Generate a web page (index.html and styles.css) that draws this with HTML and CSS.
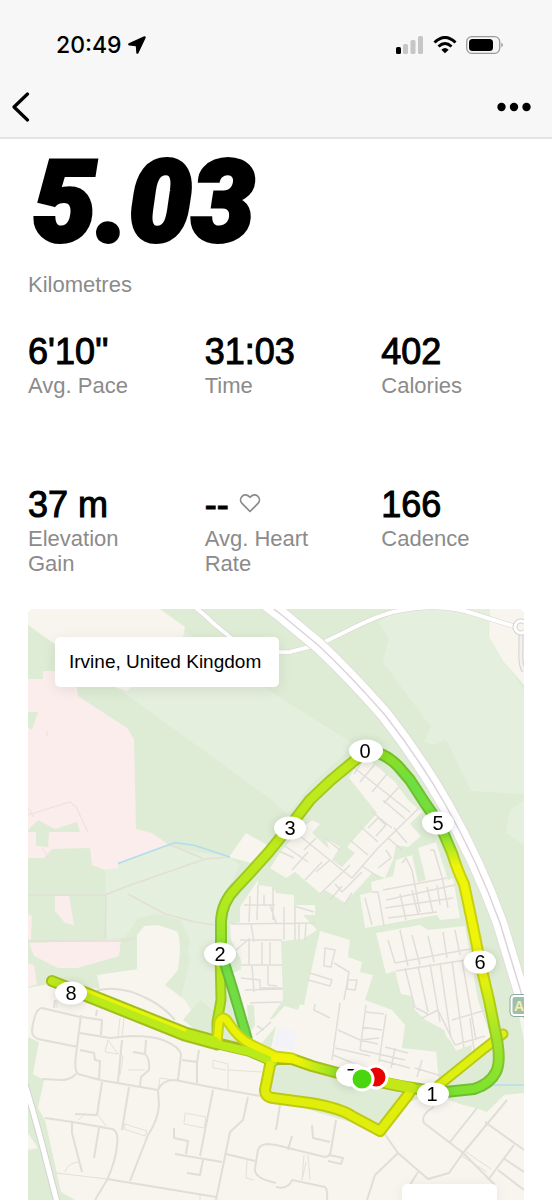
FILE: index.html
```html
<!DOCTYPE html>
<html lang="en-GB">
<head>
<meta charset="utf-8">
<meta name="viewport" content="width=device-width, initial-scale=1">
<title>Run details</title>
<link rel="stylesheet" href="styles.css">
</head>
<body>
<header class="top">
  <div class="status">
    <div class="clock">
      <span>20:49</span>
      <svg class="locate" viewBox="0 0 18 18" aria-hidden="true"><path d="M16.200.3.800 7.300Q-.6 8.500 1 9.500L7.800 10.200 8.300 16.900Q9 18.600 10.400 17.200L17.700 1.800Q18 .1 16.200.3Z"/></svg>
    </div>
    <div class="indicators">
      <svg class="signal" viewBox="0 0 28 18" aria-hidden="true">
        <rect x="0" y="11" width="5" height="7" rx="1.500"/>
        <g fill="#c6c6c6"><rect x="7" y="8" width="5" height="10" rx="1.500"/><rect x="14.500" y="4" width="5" height="14" rx="1.500"/><rect x="22" y="0" width="5" height="18" rx="1.500"/></g>
      </svg>
      <svg class="wifi" viewBox="0 0 24 18" aria-hidden="true"><path d="M1.500 6.500Q12-3.500 22.500 6.500M5.500 10.500Q12 4.500 18.500 10.500" fill="none" stroke="#000" stroke-width="3"/><path d="M8.300 13.700Q12 10.300 15.700 13.700L12 17.300Z"/></svg>
      <svg class="battery" viewBox="0 0 38 18" aria-hidden="true"><rect x=".7" y=".7" width="33" height="16.600" rx="5" fill="none" stroke="#999" stroke-width="1.300"/><rect x="3" y="3" width="24" height="12" rx="3.500"/><path d="M35.500 6.500q2.400 2.500 0 5Z" fill="#777"/></svg>
    </div>
  </div>
  <nav class="bar">
    <button class="icon-button" type="button" aria-label="Back"><svg class="back" viewBox="0 0 18 30" aria-hidden="true"><path d="M15.500 2 2 15 15.500 28" fill="none" stroke="#000" stroke-width="3.200" stroke-linecap="round" stroke-linejoin="round"/></svg></button>
    <button class="icon-button" type="button" aria-label="More"><svg class="more" viewBox="0 0 34 10" aria-hidden="true"><circle cx="4.500" cy="5" r="4.200"/><circle cx="17" cy="5" r="4.200"/><circle cx="29.500" cy="5" r="4.200"/></svg></button>
  </nav>
</header>
<main class="content">
  <h1 class="distance">5.03</h1>
  <p class="label">Kilometres</p>
  <dl class="stats">
    <div class="stat"><dd class="value">6'10''</dd><dt class="label">Avg. Pace</dt></div>
    <div class="stat"><dd class="value">31:03</dd><dt class="label">Time</dt></div>
    <div class="stat"><dd class="value">402</dd><dt class="label">Calories</dt></div>
    <div class="stat"><dd class="value">37 m</dd><dt class="label">Elevation Gain</dt></div>
    <div class="stat"><dd class="value">-- <svg class="heart" viewBox="0 0 22 24" aria-hidden="true"><path d="M11 18.500 2.800 10.200C-1.200 5.500 5.500-2.200 11 4.300 16.500-2.200 23.200 5.500 19.200 10.200Z" fill="none" stroke="#8b8b8b" stroke-width="1.700" stroke-linejoin="round"/></svg></dd><dt class="label">Avg. Heart Rate</dt></div>
    <div class="stat"><dd class="value">166</dd><dt class="label">Cadence</dt></div>
  </dl>
  <section class="map" aria-label="Route map">
    <svg class="map-art" viewBox="28 609 496 591">
      <defs>
        <linearGradient id="west" gradientUnits="userSpaceOnUse" x1="0" y1="860" x2="0" y2="960"><stop offset="0" stop-color="#bdea1b"/><stop offset=".5" stop-color="#b0e91d"/><stop offset="1" stop-color="#83e333"/></linearGradient>
        <linearGradient id="westEdge" gradientUnits="userSpaceOnUse" x1="0" y1="860" x2="0" y2="960"><stop offset="0" stop-color="#a2c922"/><stop offset="1" stop-color="#76c334"/></linearGradient>
        <linearGradient id="east" gradientUnits="userSpaceOnUse" x1="0" y1="750" x2="0" y2="1092"><stop offset="0" stop-color="#92df1e"/><stop offset=".1" stop-color="#6cdf43"/><stop offset=".24" stop-color="#80df31"/><stop offset=".34" stop-color="#eff50a"/><stop offset=".65" stop-color="#edf309"/><stop offset=".83" stop-color="#a5e52a"/><stop offset="1" stop-color="#7ee22f"/></linearGradient>
        <linearGradient id="eastEdge" gradientUnits="userSpaceOnUse" x1="0" y1="750" x2="0" y2="1092"><stop offset="0" stop-color="#78bd27"/><stop offset=".24" stop-color="#6dbd36"/><stop offset=".34" stop-color="#c9d010"/><stop offset=".65" stop-color="#c9d010"/><stop offset="1" stop-color="#6dbf31"/></linearGradient>
        <linearGradient id="south" gradientUnits="userSpaceOnUse" x1="265" y1="0" x2="432" y2="0"><stop offset="0" stop-color="#f4f400"/><stop offset=".2" stop-color="#edf307"/><stop offset=".45" stop-color="#88df2b"/><stop offset=".75" stop-color="#bce51b"/><stop offset="1" stop-color="#91e425"/></linearGradient>
      </defs>
      <rect x="28" y="609" width="496" height="591" fill="#deecd5"/>
      <g fill="#e5efdd">
        <path d="M116 687 183 630 276 695 355 745 310 785 288 815 272 800Z"/>
        <path d="M378 622 389 638 383 662 431 727 424 742 434 745 446 739 458 764 471 791 524 794V690L488 636 490 609H400Z"/>
        <path d="M105 870 168 844 185 850 230 857 240 866 221 900 218 1045 178 1010 190 960 180 928 150 917 137 935 107 940Z"/>
        <path d="M524 800 510 810 506 833 524 845Z"/>
      </g>
      <g fill="#f7f5ee">
        <path d="M28 609H160L185 627 183 637 127 691 115 687 28 625Z"/>
        <path d="M490 609H524V685L504 662 489 637Z"/>
        <path d="M96 975 137 969V935L144 926 158 924 176 928 181 943 178 970 165 985 185 1000 191 1010 183 1020 217 1047 275 1062 267 1097 380 1131 400 1105 432 1094 463 1105 485 1110 505 1092 524 1093V1200H75L61 1192 45 1120 38 1108 44 1080 33 1074 39 1042 28 1037V988Z"/>
        <path d="M28 1133 38 1148 28 1150ZM524 1020 518 1010 524 1040Z"/>
        <path d="M229 857 246 833 276 850 262 866Z"/>
        <path d="m349 778 11-18 12 2 23 20 13 18 14 12-12 12 11 12-13 11-12-2-3 15-8 18-13-5-27 30-20-13-4 4-26-22-9 6-16-10 12-18 18-20 12-10 8 4-8 9 17 16-3-11 14 9-8 13 10 7 13-14-8-6 30-34Z"/>
        <path d="m418 848 18-6 12 38 5-2 7 40-20 2-3-5-72 13-5-33 12-3-1-10 22-6 3-16 16-5 6 27 8-2Z"/>
        <path d="m376 933 44-8 8 5 37-4 13 74 14 40-32 18-10-18-25-20-10-10-3-14-11-2-6-23-9 3Z"/>
        <path d="m320 931 30 9-2 17 14 5-2 10 13 3-8 25 27 10 13 15-3 23 36 4 12 8 5 10-23 16-92-16-64-16-30-8 28-28 13-15 17 2 4-20Z"/>
        <path d="m240 907 18-27v5l15 2 3 6 18 2v10h21v10h-12l14 15-17 11h-19l2 59-21 30-22-40 1-30-10-20-1-16 10-2Z"/>
        <path d="M228 975 240 970 272 1000 262 1022 300 1010 300 1060 255 1045 232 1010Z"/>
      </g>
      <path fill="#f3f2f8" d="m278 1028 18 4-2 18-20-4Z"/>
      <g fill="#faedeb">
        <path d="M28 679H43V671H60L77 687 78 696 127 728 134 739 136 829 152 833 168 844 118 863V868L105 870 92 865 90 848 52 849 44 858H28Z"/>
        <path d="M55 896H69L74 925 65 923 55 911ZM29 943 121 940 119 956 78 968H58L34 956ZM28 963 34 965 37 984 28 987ZM28 914 32 916 31 940 28 939Z"/>
      </g>
      <g fill="#deecd5">
        <path d="M28 712H38L32 730 28 727ZM28 830 38 820 55 829 77 822 80 832H49L48 847 36 846V832H28Z"/>
        <path d="M38 969 58 971 78 968 119 957 122 942 138 918 158 914 180 920 190 941 183 974 166 985 181 973 179 932 158 925 144 926 137 935V969L97 975 100 989 60 985Z"/>
        <path d="m278 1067 56 10 65 15-20 34-36-18-70-13Z"/>
        <path d="M185 1018 200 1000 215 1012 216 1045ZM247 1005 254 1005 255 1025 249 1034ZM284 941 310 938 309 978 298 1010 284 1006ZM262 1043 276 1026 271 1048Z"/>
        <path d="m411 1012 33 18 8 22 20-7-1 12-32 25-3-32-34-4ZM455 1100l40-10 29-4v7l-20 2-17 17Z"/>
      </g>
      <g fill="none" stroke="#f0e0df" stroke-width="1.200">
        <path d="M28 815 70 802 76 807 88 832M28 808 34 817M42 848 52 862M47 731V736"/>
      </g>
      <g fill="none" stroke="#e2dfd6" stroke-width="1.500"><path d="M28 895H105L125 887 205 859 230 857M106 895 105 938M28 941H122L135 938M128 894 165 914 195 922 215 925M168 844 202 858"/></g>

      <g fill="none" stroke="#e0ded7" stroke-width="2" stroke-linejoin="round">
        <path d="M80 1017 42 1008Q35 1008 32 1030 32 1037 38 1039L78 1047M81 1015 76 1055Q74 1070 78 1074L100 1080 158 1090M76 1074Q70 1080 62 1080L42 1079M80 1033 110 1038 130 1036Q155 1036 165 1041 180 1047 181 1055L178 1080M80 1050 94 1053 95 1060 100 1061 99 1080M82 1017 102 1020 101 1035M122 1040 118 1082M133 1052 145 1054Q150 1058 149 1070L141 1077 140 1086M146 1040 145 1054"/>
        <path d="M158 1090Q162 1080 175 1080L215 1088 260 1096M158 1090 159 1105Q158 1120 148 1135L130 1181M129 1087 122 1130M102 1082 97 1115 75 1114M45 1118 73 1122 112 1129Q119 1131 117 1145 116 1160 107 1180L95 1200M72 1122V1133L82 1172M99 1128 94 1158M213 1090 200 1156M248 1097 243 1120 230 1132 216 1200M175 1154 222 1162M174 1128V1138L188 1141 186 1154M203 1160 200 1175 187 1173M107 1179 216 1197M226 1154 255 1161M276 1183Q253 1178 255 1168L258 1150Q260 1144 268 1144L276 1145 325 1157Q330 1157 331 1150L336 1120M182 1060 197 1062V1083M199 1050 197 1062"/>
        <path d="M312 1125 313 1138 330 1142M276 1187Q288 1190 292 1180L325 1187Q328 1190 327 1200M292 1136 288 1150M280 1105 276 1130M329 1155 343 1158 341 1164 328 1161M384 1133 398 1153 375 1175 367 1200M398 1153 428 1179 449 1173 463 1153 507 1100M434 1107Q420 1115 424 1123L462 1152 495 1185M450 1142 477 1108M485 1122 524 1150M514 1145 488 1180M503 1158 524 1172M498 1170 524 1190M410 1185 418 1172"/>
        <path d="M96 991Q120 984 150 1000 165 1008 175 1020M55 1000 54 1008M97 1010 96 1016"/>
      </g>
      <g fill="none" stroke="#e3e1da" stroke-width="1">
        <path d="M185 1113 206 1117 204 1128 184 1124ZM213 1060 228 1064V1090M228 1070 262 1072M213 1060V1068L226 1070M108 1040 118 1054 105 1052ZM128 1070H145M119 1055 123 1056 120 1075M125 1124 147 1131 145 1136 124 1129ZM158 1090 160 1078 173 1080M78 1120 84 1115M98 1115 106 1126M56 1173 107 1179M65 1172Q68 1162 80 1162M247 1160 246 1178 254 1180M200 1195V1200M304 1155 302 1180M308 1155 310 1180M302 1180 306 1162M460 1155 487 1172M466 1152 491 1169M57 1000V1008M120 1018 118 1037M124 1018 122 1037"/>
      </g>

      <g fill="none" stroke="#e0ded8" stroke-width="1.500" stroke-linejoin="round">
        <path d="M300 836 352 878 378 848 421 806M316 872 330 860M320 894 350 865M335 884 342 892 362 872M285 846 308 862M352 766 410 812M365 757 354 774M375 764 360 782M387 774 372 792M399 787 384 803M350 840 368 855M360 826 378 842M372 812 392 828M383 800 405 819M394 828 407 843M388 838 402 850M368 828 378 818 386 825 376 836M378 868 391 858 386 850M304 850 316 838M292 870 308 852M277 850 294 858M305 880 322 862M330 900 342 886M362 866 380 878M344 905 352 893M325 838 340 850"/>
        <path d="M372 892 378 892 384 926M365 898 372 925M383 890 447 878M386 900 455 885M402 863 406 858 412 870 420 912M430 850 434 850 442 877 448 908M385 908 453 898M388 918 437 912M400 894 406 920M412 890 418 914M427 887 433 913M437 885 440 905"/>
        <path d="M395 963 475 948M396 971 478 958M388 940 395 963M400 930 408 966M412 935 420 965M428 936 434 962M443 932 447 958M455 930 460 955M405 968 415 1008M418 966 428 1012M430 964 440 1022M440 963 451 1038M452 961 464 1048M462 960 476 1040M416 1008 428 1014M422 1018 438 1010 455 1045M455 1045 485 1036M452 1020 486 1010M470 1018 474 1050"/>
        <path d="m325 948 10 2-4 17-7-1ZM334 963 349 972 344 1000M310 973 332 980 330 986 308 980M348 980 357 980 355 990 347 989ZM340 1003 332 1060M366 1005 360 1050M386 1014 379 1062M338 1030 360 1040 379 1038M366 1012 384 1014M362 1027 382 1030M360 1040 378 1044M360 1050 405 1060M335 1048 370 1056M385 1047 408 1053M380 1060 410 1068M422 1060 417 1077M415 1068 445 1077M395 1048 391 1068M333 1055 365 1068M315 1004 314 1010 330 1018"/>
        <path d="M244 905H275M258 885 257 920M273 887V920M250 896 249 922M264 895V905M231 924 315 923M240 940H282M251 924 254 942M270 905 276 923M284 907V940M295 907V940M236 950 250 938M241 965H282M249 940V965M262 942V965M270 942V965M241 978 260 980V988H282M252 966 254 992M268 966V985M268 985 277 986M245 990 283 989M256 1035 271 1022M257 1026 264 1030M250 1003 281 1002M299 923V940M306 923 305 940M294 906 314 912"/>
      </g>

      <path d="M118 863.500 175 842.500 195 845.500 230 857M490 1085H524" fill="none" stroke="#b2dcf0" stroke-width="1.500"/>

      <path d="M192 605Q205 615 212 622L230 637Q252 654 290 652L320 644 345 632Q380 614 398 611 440 602 475 614L516 627M524 671Q520 665 521 650V634" fill="none" stroke="#d5d0cf" stroke-width="5"/>
      <path d="M192 605Q205 615 212 622L230 637Q252 654 290 652L320 644 345 632Q380 614 398 611 440 602 475 614L516 627" fill="none" stroke="#fff" stroke-width="4"/>
      <path d="M524 671Q520 665 521 650V634" fill="none" stroke="#f3f1ec" stroke-width="3"/>
      <circle cx="521" cy="627" r="6" fill="#f7f5ee" stroke="#d5d0cf" stroke-width="5"/><circle cx="521" cy="627" r="6" fill="none" stroke="#fff" stroke-width="3"/>
      <g fill="none">
        <path d="M262 600 283 616 318 645Q350 675 385 715 420 760 445 804 478 862 500 923L524 1002" stroke="#e0ddd9" stroke-width="16"/>
        <path d="M262 600 283 616 318 645Q350 675 385 715 420 760 445 804 478 862 500 923L524 1002" stroke="#fff" stroke-width="14"/>
        <path d="M262 600 283 616 318 645Q350 675 385 715 420 760 445 804 478 862 500 923L524 1002" stroke="#ddd3dc" stroke-width="1.500"/>
        <path d="M23 1078Q31 1103 42 1144L58 1206" stroke="#d5d3cf" stroke-width="7"/>
        <path d="M23 1078Q31 1103 42 1144L58 1206" stroke="#fff" stroke-width="5"/>
      </g>
      <rect x="511.500" y="996" width="34" height="19" rx="3" fill="#9ebfae" stroke="#fff" stroke-width="2"/>
      <rect x="510" y="994.500" width="36" height="22" rx="4" fill="none" stroke="#8eaaa0" stroke-width="1"/>
      <text class="road-name" x="514" y="1011">A</text>

      <g class="route">
        <path d="M270 1065 265 1090Q265 1097 273 1098L310 1103Q340 1108 352 1116L380 1131 408 1095 412 1088" stroke="#bfc914" stroke-width="12"/>
        <path d="M503 1034 480 1052 438 1086" stroke="#b9c91a" stroke-width="11"/>
        <path d="M503 1034 480 1052 438 1086" stroke="#def010" stroke-width="7"/>
        <path d="M366 751Q383 751 398 766L410 780 425 803 440 825 452 853Q458 872 464 884 474 930 480 962L489 1000 495 1030Q502 1060 496 1072 490 1084 474 1089L445 1092" stroke="url(#eastEdge)" stroke-width="12"/>
        <path d="M366 751Q383 751 398 766L410 780 425 803 440 825 452 853Q458 872 464 884 474 930 480 962L489 1000 495 1030Q502 1060 496 1072 490 1084 474 1089L445 1092" stroke="url(#east)" stroke-width="8"/>
        <path d="M217 1045 217 1022 221 1000 220 953" stroke="#9cc822" stroke-width="11"/>
        <path d="M217 1045 217 1022 221 1000 220 953" stroke="#b6e91c" stroke-width="7"/>
        <path d="M222 955 233 990 247 1038" stroke="#68bd3e" stroke-width="11"/>
        <path d="M222 955 233 990 247 1038" stroke="#72dc43" stroke-width="7"/>
        <path d="M366 751 330 781 310 800 290 826 268 853 250 873 236 888Q222 902 221 921V953" stroke="url(#westEdge)" stroke-width="12"/>
        <path d="M366 751 330 781 310 800 290 826 268 853 250 873 236 888Q222 902 221 921V953" stroke="url(#west)" stroke-width="8"/>
        <path d="M275 1059 292 1059 312 1066 345 1075 400 1086 432 1091" stroke="#a8bd1a" stroke-width="12"/>
        <path d="M52 981 85 994 140 1016 185 1034 220 1044 250 1051 273 1061" stroke="#a2bd1c" stroke-width="12"/>
        <path d="M80 992 140 1016 185 1034 214 1042" stroke="#a2bd1c" stroke-width="15"/>
        <path d="M217 1042 219 1022Q223 1014 228 1022 238 1038 252 1045L275 1056 292 1058" stroke="#c5d315" stroke-width="11"/>
        <path d="M217 1042 219 1022Q223 1014 228 1022 238 1038 252 1045L275 1056 292 1058" stroke="#eaf208" stroke-width="7"/>
        <path d="M52 981 85 994 140 1016 185 1034 220 1045 250 1052 273 1062" stroke="#bbea1b" stroke-width="8"/>
        <path d="M80 992 140 1016 185 1034 214 1042" stroke="#bbea1b" stroke-width="11"/>
        <path d="M270 1065 265 1090Q265 1097 273 1098L310 1103Q340 1108 352 1116L380 1131 408 1095 412 1088" stroke="#e0ee0c" stroke-width="8"/>
        <path d="M80 988 140 1012 185 1030" stroke="#e8f20a" stroke-width="3"/>
        <path d="M275 1058 292 1059 312 1066 345 1075 400 1086 432 1091" stroke="url(#south)" stroke-width="8"/>
        <path d="M388 1083 412 1088" stroke="#c4e718" stroke-width="10"/>
      </g>

      <g class="markers">
        <ellipse cx="366" cy="751" rx="17" ry="11.500"/><text x="365" y="758">0</text>
        <ellipse cx="290" cy="828" rx="16" ry="11.500"/><text x="290" y="835">3</text>
        <ellipse cx="438" cy="823" rx="16" ry="11.500"/><text x="438" y="830">5</text>
        <ellipse cx="220" cy="954" rx="16" ry="11.500"/><text x="220" y="961">2</text>
        <ellipse cx="480" cy="962" rx="16" ry="11.500"/><text x="480" y="969">6</text>
        <ellipse cx="71" cy="993" rx="16" ry="11.500"/><text x="71" y="1000">8</text>
        <ellipse cx="352" cy="1075" rx="16" ry="11.500"/><text x="352" y="1083">7</text>
        <ellipse cx="433" cy="1094" rx="16" ry="11.500"/><text x="432" y="1101">1</text>
      </g>
      <g stroke="#fff" stroke-width="3"><circle cx="376" cy="1077" r="11" fill="#ea0000"/><circle cx="362" cy="1079" r="11" fill="#4ad60e"/></g>
    </svg>
    <div class="place">Irvine, United Kingdom</div>
    <div class="card"></div>
  </section>
</main>
</body>
</html>
```
FILE: styles.css
```css
* {
  box-sizing: border-box;
}

body {
  margin: 0;
  background: #fff;
  color: #000;
  font-family: "Liberation Sans", Arial, sans-serif;
}

svg {
  display: block;
}

.top {
  padding: 30px 0 0;
  background: #f7f7f7;
  border-bottom: 2px solid #e4e4e4;
}

.status {
  display: flex;
  align-items: center;
  justify-content: space-between;
  height: 30px;
  padding: 0 48px 0 56px;
}

.clock {
  display: flex;
  align-items: center;
  gap: 6px;
  font: 500 23px/30px Inter, sans-serif;
}

.locate {
  width: 18px;
  height: 18px;
}

.indicators {
  display: flex;
  align-items: center;
  gap: 9px;
}

.signal {
  width: 28px;
  height: 18px;
}

.wifi {
  width: 24px;
  height: 18px;
}

.battery {
  width: 38px;
  height: 18px;
}

.bar {
  display: flex;
  align-items: center;
  justify-content: space-between;
  height: 77px;
  padding: 16px 21px 0 12px;
}

.icon-button {
  padding: 0;
  border: 0;
  background: none;
}

.back {
  width: 18px;
  height: 30px;
}

.more {
  width: 34px;
  height: 10px;
}

.content {
  padding: 0 28px;
}

.distance {
  margin: 0;
  padding-left: 5px;
  font: italic 900 112px/128px Roboto, sans-serif;
  -webkit-text-stroke: 4px #000;
}

.label {
  margin: 0;
  color: #8b8b8b;
  font-size: 22px;
  line-height: 25px;
}

.distance + .label {
  padding-top: 5px;
}

.stats {
  display: grid;
  grid-template-columns: repeat(3, 1fr);
  column-gap: 34px;
  margin: 0;
  padding-top: 34px;
}

.stat {
  min-height: 153px;
}

.stat:nth-child(n + 4) {
  min-height: 0;
}

.value {
  display: flex;
  align-items: center;
  gap: 10px;
  margin: 0;
  font-size: 36px;
  line-height: 42px;
  -webkit-text-stroke: 1px #000;
}

.heart {
  width: 22px;
  height: 24px;
}

.map {
  position: relative;
  margin-top: 33px;
  overflow: hidden;
  border-radius: 6px 6px 0 0;
}

.map-art {
  width: 100%;
  height: auto;
}

.road-name {
  fill: #f5f0a4;
  font: 700 14px "Liberation Sans", Arial, sans-serif;
}

.route {
  fill: none;
  stroke-linecap: round;
  stroke-linejoin: round;
}

.markers {
  fill: #fff;
  font-size: 20px;
  text-anchor: middle;
  filter: drop-shadow(0 1px 4px rgb(0 0 0 / 15%));
}

.markers text {
  fill: #000;
}

.place {
  position: absolute;
  top: 28px;
  left: 27px;
  padding: 0 18px 0 14px;
  border-radius: 5px;
  background: #fff;
  box-shadow: 0 3px 14px rgb(0 0 0 / 8%);
  font-size: 19px;
  line-height: 50px;
}

.card {
  position: absolute;
  right: 27px;
  bottom: 0;
  width: 95px;
  height: 16px;
  border-radius: 5px 5px 0 0;
  background: #fff;
  box-shadow: 0 3px 14px rgb(0 0 0 / 8%);
}
```
